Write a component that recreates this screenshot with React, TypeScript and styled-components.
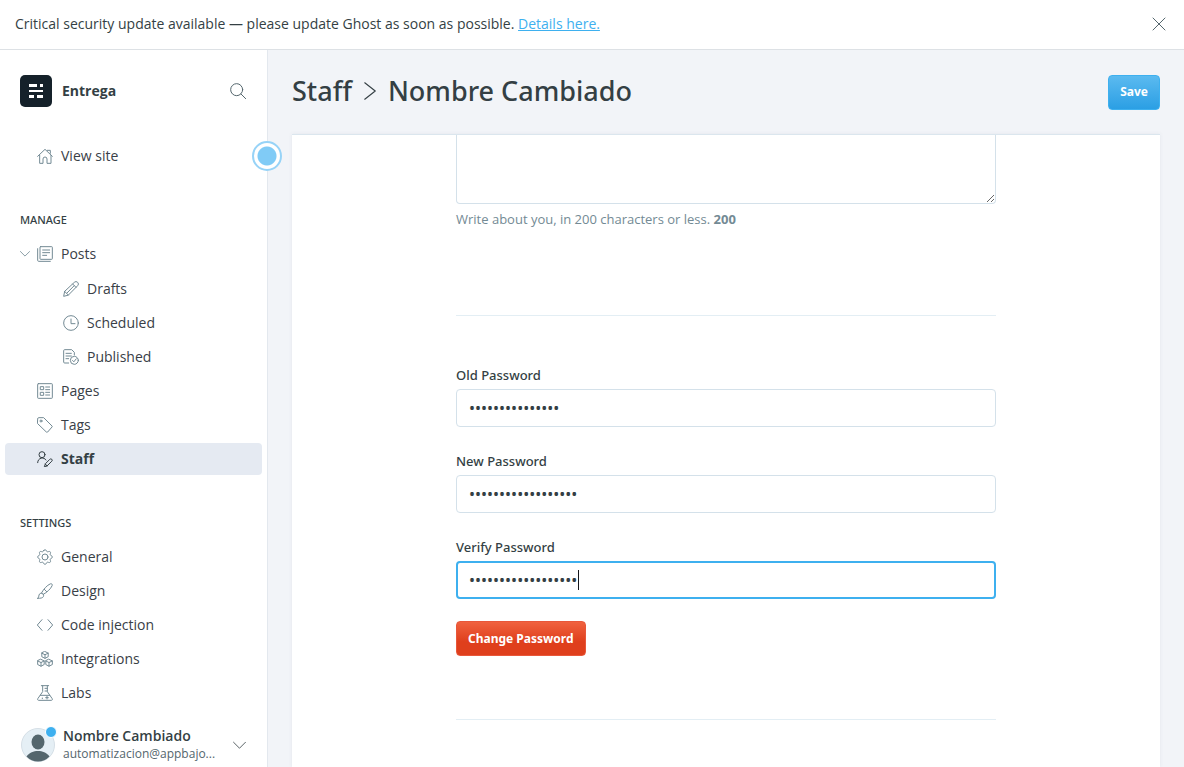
import React, { useEffect, useRef } from "react";
import styled, { createGlobalStyle, css } from "styled-components";

const mediumFont = `"Noto Sans", "Open Sans", sans-serif`;

const GlobalStyle = createGlobalStyle`
  *, *::before, *::after { box-sizing: border-box; }
  body {
    margin: 0;
    background: #f2f4f8;
    color: #394047;
    font-family: "Open Sans", "Noto Sans", sans-serif;
    font-size: 14px;
    line-height: 20px;
  }
  button, input, textarea { font: inherit; }
  svg { flex: none; }
`;

const Page = styled.div`
  display: flex;
  flex-direction: column;
  height: 100vh;
  overflow: hidden;
`;

const Banner = styled.aside`
  display: flex;
  align-items: center;
  justify-content: space-between;
  flex: none;
  height: 50px;
  padding: 0 17px 2px 15px;
  background: #fff;
  border-bottom: 1px solid #dde1e5;
  color: #343f44;
`;

const Link = styled.a`
  color: #3eb0ef;
  text-decoration: underline;
`;

const IconButton = styled.button`
  display: flex;
  align-items: center;
  justify-content: center;
  padding: 0;
  border: 0;
  background: none;
  color: #54666d;
  cursor: pointer;
`;

const Body = styled.div`
  display: flex;
  flex: 1;
  min-height: 0;
`;

const Sidebar = styled.nav`
  position: relative;
  display: flex;
  flex-direction: column;
  flex: none;
  width: 268px;
  background: #fff;
  border-right: 1px solid #e3e8ee;
`;

const SiteHeader = styled.header`
  display: flex;
  align-items: center;
  gap: 10px;
  margin: 25px 21px 33px 20px;
`;

const SiteName = styled.div`
  flex: 1;
  color: #343f44;
  font-weight: 700;
`;

const Section = styled.section`
  margin-bottom: 38px;
  &:last-of-type { margin-bottom: 0; }
`;

const SectionTitle = styled.h2`
  margin: 0 0 8px;
  padding-left: 20px;
  font-family: ${mediumFont};
  font-size: 11px;
  font-weight: 500;
  line-height: 20px;
  color: #343f44;
  text-transform: uppercase;
`;

const NavList = styled.ul<{ $nested?: boolean }>`
  display: flex;
  flex-direction: column;
  gap: 2px;
  margin: ${(p) => (p.$nested ? "3px 0 0 26px" : "0 5px")};
  padding: 0;
  list-style: none;
`;

const NavLink = styled.a<{ $active?: boolean }>`
  position: relative;
  display: flex;
  align-items: center;
  gap: 8px;
  height: 32px;
  padding-left: 32px;
  border-radius: 4px;
  color: #394047;
  text-decoration: none;
  svg { color: #738a94; }
  ${(p) =>
    p.$active &&
    css`
      background: #e5eaf2;
      color: #343f44;
      font-weight: 700;
      svg { color: #343f44; }
    `}
`;

const Expander = styled.span`
  position: absolute;
  left: 15px;
  display: flex;
`;

const Beacon = styled.button`
  position: absolute;
  top: 91px;
  right: -15px;
  width: 30px;
  height: 30px;
  padding: 0;
  border: 2px solid #97d3f7;
  border-radius: 50%;
  background: radial-gradient(circle, #80cbf6 0 9px, #fff 10px);
`;

const UserMenu = styled.button`
  display: flex;
  align-items: center;
  gap: 8px;
  margin-top: auto;
  padding: 0 21px 4px;
  border: 0;
  background: none;
  color: #343f44;
  text-align: left;
  line-height: 18px;
`;

const Avatar = styled.span`
  position: relative;
  display: flex;
  flex: none;
`;

const Unread = styled.span`
  position: absolute;
  top: -2px;
  right: -2px;
  width: 12px;
  height: 12px;
  border: 1px solid #fff;
  border-radius: 50%;
  background: #3eb0ef;
`;

const UserText = styled.span`
  display: flex;
  flex-direction: column;
  flex: 1;
  white-space: nowrap;
`;

const UserName = styled.span`
  font-weight: 600;
`;

const UserEmail = styled.span`
  color: #54666d;
  font-size: 12px;
`;

const Main = styled.main`
  display: flex;
  flex: 1;
  flex-direction: column;
  min-width: 0;
  padding: 0 24px;
`;

const Toolbar = styled.header`
  display: flex;
  align-items: center;
  justify-content: space-between;
  height: 84px;
`;

const Breadcrumb = styled.h1`
  display: flex;
  align-items: center;
  gap: 9px;
  margin: 0;
  padding-bottom: 2px;
  color: #343f44;
  font-family: ${mediumFont};
  font-size: 27px;
  font-weight: 500;
  line-height: 32px;
`;

const CrumbLink = styled.a`
  color: inherit;
  text-decoration: none;
`;

const Button = styled.button<{ $tone: "blue" | "red" }>`
  height: 35px;
  padding: 0 11px;
  border: 1px solid ${(p) => (p.$tone === "blue" ? "#3eb0ef" : "#e8573a")};
  border-radius: 4px;
  background: ${(p) =>
    p.$tone === "blue"
      ? "linear-gradient(#5bbaf0, #2b9fe4)"
      : "linear-gradient(#f0623f, #df3f1c 60%, #df3f1c)"};
  color: #fff;
  font-family: ${mediumFont};
  font-size: 12px;
  font-weight: 700;
  cursor: pointer;
`;

const Card = styled.section`
  flex: 1;
  min-height: 0;
  overflow: hidden;
  background: #fff;
  border-top: 1px solid #dbe6ee;
  box-shadow: 0 0 4px rgba(60, 80, 120, 0.08);
`;

const Form = styled.form`
  width: 100%;
  max-width: 540px;
  margin: 0 auto;
`;

const Bio = styled.textarea`
  display: block;
  width: 100%;
  height: 69px;
  padding: 8px 12px;
  border: solid #d4e1ea;
  border-width: 0 1px 1px;
  border-radius: 0 0 4px 4px;
  background: #fff;
  outline: 0;
  resize: vertical;
`;

const Hint = styled.p`
  margin: 5px 0 86px;
  color: #738a94;
  font-size: 13px;
`;

const Divider = styled.hr`
  height: 1px;
  margin: 0;
  border: 0;
  background: #e3eef4;
`;

const Fields = styled.div`
  display: flex;
  flex-direction: column;
  gap: 25px;
  margin: 50px 0 22px;
`;

const Field = styled.div`
  position: relative;
  display: flex;
  flex-direction: column;
  gap: 5px;
`;

const Label = styled.label`
  font-family: ${mediumFont};
  font-size: 13px;
  font-weight: 500;
  line-height: 18px;
  color: #343f44;
`;

const Input = styled.input`
  width: 100%;
  height: 38px;
  padding: 0 12px;
  border: 1px solid #d4e1ea;
  border-radius: 4px;
  background: #fff;
  color: #343f44;
  font-family: ${mediumFont};
  font-size: 16px;
  caret-color: transparent;
  outline: 0;
  &:focus {
    padding: 0 11px;
    border: 2px solid #3eb0ef;
  }
`;

const Caret = styled.span<{ $after: number }>`
  position: absolute;
  bottom: 9px;
  left: ${(p) => 14 + p.$after * 6}px;
  width: 1px;
  height: 20px;
  background: #15171a;
  pointer-events: none;
`;

const Actions = styled.div`
  margin-bottom: 63px;
`;

const shapes: Record<string, React.ReactNode> = {
  home: (
    <path d="M1 12.500 12 2l11 10.500M4 11v12h5v-6.500a2.500 2.500 0 0 1 6 0V23h6V11M15.500 3.500H20V8" />
  ),
  posts: (
    <path d="M5.500 1h16.500a1 1 0 0 1 1 1v17a1 1 0 0 1-1 1H5.500a1 1 0 0 1-1-1V2a1 1 0 0 1 1-1zM1 4v17.500a1.500 1.500 0 0 0 1.500 1.500H20M8.500 6h10.500M8.500 10h10.500M8.500 14h6" />
  ),
  pencil: (
    <path d="m2.500 15.500-1.500 7.500 7-1.800L22 7a3.500 3.500 0 0 0-5-5L2.500 15.500l5.500 5.700M14.500 4.500l5 5M16.800 7 6 18" />
  ),
  clock: (
    <>
      <circle cx="12" cy="12" r="11" />
      <path d="M12 6v7h6" />
    </>
  ),
  published: (
    <>
      <path d="M8.500 21H2.500A1.500 1.500 0 0 1 1 19.500v-17A1.500 1.500 0 0 1 2.500 1H13l4 4v4M4.500 6.500h8M4.500 10.500h8M4.500 14.500h4" />
      <circle cx="17" cy="17" r="6" />
      <path d="m14.300 17.200 2 2 3.500-4.400" />
    </>
  ),
  pages: (
    <>
      <rect x="1" y="1" width="22" height="22" rx="1" />
      <path d="M5.500 5.500h4.500V10H5.500zM5.500 14h4.500v4.500H5.500zM13 6h6M13 10h6M13 14h6M13 18h6" />
    </>
  ),
  tag: (
    <>
      <path d="M1 2.500A1.500 1.500 0 0 1 2.500 1H10l12.500 12.500a1 1 0 0 1 0 1.500L16 22.500a1.500 1.500 0 0 1-2 0L1 10z" />
      <circle cx="6" cy="6" r="1.500" />
    </>
  ),
  staff: (
    <>
      <circle cx="7.500" cy="5.500" r="4.500" />
      <path d="M1 17.500c0-8 10-9 12.500-4M12.500 19.500l-1.500 4 4-1 7.200-7.200a2 2 0 0 0-2.900-2.900zM12.500 19.500l2.500 3" />
    </>
  ),
  gear: (
    <>
      <circle cx="12" cy="12" r="4.500" />
      <path d="M10 2.500c.8-2 3.200-2 4 0 .6 1.700 1.700 2.100 3.300 1.400 2-.9 3.700.8 2.800 2.800-.7 1.600-.3 2.700 1.400 3.300 2 .8 2 3.200 0 4-1.700.6-2.100 1.700-1.400 3.300.9 2-.8 3.700-2.800 2.800-1.600-.7-2.700-.3-3.300 1.400-.8 2-3.200 2-4 0-.6-1.700-1.700-2.100-3.300-1.400-2 .9-3.700-.8-2.800-2.800.7-1.600.3-2.700-1.400-3.300-2-.8-2-3.200 0-4 1.700-.6 2.100-1.700 1.400-3.300-.9-2 .8-3.700 2.800-2.800C8.300 4.600 9.400 4.200 10 2.500z" />
    </>
  ),
  brush: (
    <path d="M1 23c2-1 1.500-3 2-5 .8-3 4.500-3.500 6-1.500 2 2.500.5 5.500-2.500 6-2 .4-3.500.5-5.500.5zM7 14.500C10 9 15 3.500 20 1.300c2-.8 3.500.7 2.700 2.700C20.500 9 15 14 9.500 17M11 9.500l3.500 3.500" />
  ),
  code: <path d="m7.500 4-7 8 7 8M16.500 4l7 8-7 8" />,
  cubes: (
    <path d="m12 .8 4.800 2.400v5.400L12 11 7.200 8.600V3.200zM7.200 3.200 12 5.600l4.800-2.400M12 5.600V11M6 12.500l4.800 2.400v5.400L6 22.800l-5-2.500v-5.400zM1 14.900l5 2.400 4.800-2.400M6 17.300v5.500M18 12.500l5 2.400v5.400l-5 2.500-4.800-2.500v-5.400zM13.200 14.900l4.800 2.400 5-2.400M18 17.300v5.500" />
  ),
  labs: (
    <path d="M6.500 1h11M8.500 1v9L1.200 20.500C.5 22 1 23 2.500 23h19c1.500 0 2-1 1.300-2.500L15.500 10V1M12 5h3.500M12 9h3.500M5 15.500h14M15 17v4M13 19h4M8 19.500v1" />
  ),
  search: (
    <>
      <circle cx="10" cy="10" r="9" />
      <path d="m16.500 16.500 7 7" />
    </>
  ),
  close: <path d="m3 3 18 18M21 3 3 21" />,
  down: <path d="m1 6 11 11L23 6" />,
  right: <path d="m5 1 14 11L5 23" />,
};

const Icon = ({ name, size = 16, weight = 1.5 }: { name: string; size?: number; weight?: number }) => (
  <svg
    width={size}
    height={size}
    viewBox="0 0 24 24"
    fill="none"
    stroke="currentColor"
    strokeWidth={weight}
    strokeLinecap="round"
    strokeLinejoin="round"
    aria-hidden="true"
  >
    {shapes[name]}
  </svg>
);

const Logo = () => (
  <svg width="32" height="32" viewBox="0 0 32 32" aria-hidden="true">
    <rect width="32" height="32" rx="5" fill="#15212a" />
    <path
      d="M9 9h8v3H9zM20 9h3v3h-3zM9 15h14v2H9zM9 20h5v3H9zM17 20h6v3h-6z"
      fill="#fff"
    />
  </svg>
);

const Person = () => (
  <svg width="34" height="34" viewBox="0 0 34 34" aria-hidden="true">
    <circle cx="17" cy="17" r="16.500" fill="#e5eff5" stroke="#d5dfe6" />
    <ellipse cx="17" cy="14" rx="6.500" ry="7.500" fill="#54666d" />
    <path d="M5.500 28.500c3-4 7-5.500 11.500-5.500s8.500 1.500 11.500 5.500A16 16 0 0 1 17 33.500a16 16 0 0 1-11.500-5z" fill="#54666d" />
  </svg>
);

const Item = ({ icon, label, active }: { icon: string; label: string; active?: boolean }) => (
  <li>
    <NavLink href="#" $active={active} aria-current={active ? "page" : undefined}>
      <Icon name={icon} />
      {label}
    </NavLink>
  </li>
);

const PasswordField = ({ id, label, value, focused }: { id: string; label: string; value: string; focused?: boolean }) => {
  const ref = useRef<HTMLInputElement>(null);
  useEffect(() => {
    if (focused && ref.current) {
      ref.current.focus();
      ref.current.setSelectionRange(value.length, value.length);
    }
  }, [focused, value]);
  return (
    <Field>
      <Label htmlFor={id}>{label}</Label>
      <Input ref={ref} id={id} type="password" defaultValue={value} />
      {focused && <Caret $after={value.length} />}
    </Field>
  );
};

export default function App() {
  return (
    <>
      <GlobalStyle />
      <Page>
        <Banner>
          <span>
            Critical security update available — please update Ghost as soon as possible.{" "}
            <Link href="#">Details here.</Link>
          </span>
          <IconButton type="button" aria-label="Close">
            <Icon name="close" />
          </IconButton>
        </Banner>
        <Body>
          <Sidebar>
            <SiteHeader>
              <Logo />
              <SiteName>Entrega</SiteName>
              <IconButton type="button" aria-label="Search">
                <Icon name="search" />
              </IconButton>
            </SiteHeader>
            <Section>
              <NavList>
                <Item icon="home" label="View site" />
              </NavList>
            </Section>
            <Section>
              <SectionTitle>Manage</SectionTitle>
              <NavList>
                <li>
                  <NavLink href="#">
                    <Expander>
                      <Icon name="down" size={10} weight={2} />
                    </Expander>
                    <Icon name="posts" />
                    Posts
                  </NavLink>
                  <NavList $nested>
                    <Item icon="pencil" label="Drafts" />
                    <Item icon="clock" label="Scheduled" />
                    <Item icon="published" label="Published" />
                  </NavList>
                </li>
                <Item icon="pages" label="Pages" />
                <Item icon="tag" label="Tags" />
                <Item icon="staff" label="Staff" active />
              </NavList>
            </Section>
            <Section>
              <SectionTitle>Settings</SectionTitle>
              <NavList>
                <Item icon="gear" label="General" />
                <Item icon="brush" label="Design" />
                <Item icon="code" label="Code injection" />
                <Item icon="cubes" label="Integrations" />
                <Item icon="labs" label="Labs" />
              </NavList>
            </Section>
            <UserMenu type="button">
              <Avatar>
                <Person />
                <Unread />
              </Avatar>
              <UserText>
                <UserName>Nombre Cambiado</UserName>
                <UserEmail>automatizacion@appbajo...</UserEmail>
              </UserText>
              <Icon name="down" size={13} />
            </UserMenu>
            <Beacon type="button" aria-label="Toggle sidebar" />
          </Sidebar>
          <Main>
            <Toolbar>
              <Breadcrumb>
                <CrumbLink href="#">Staff</CrumbLink>
                <Icon name="right" size={18} />
                Nombre Cambiado
              </Breadcrumb>
              <Button type="button" $tone="blue">Save</Button>
            </Toolbar>
            <Card>
              <Form>
                <Bio aria-label="Bio" />
                <Hint>
                  Write about you, in 200 characters or less. <b>200</b>
                </Hint>
                <Divider />
                <Fields>
                  <PasswordField id="old-password" label="Old Password" value="123456789012345" />
                  <PasswordField id="new-password" label="New Password" value="123456789012345678" />
                  <PasswordField id="verify-password" label="Verify Password" value="123456789012345678" focused />
                </Fields>
                <Actions>
                  <Button type="button" $tone="red">Change Password</Button>
                </Actions>
                <Divider />
              </Form>
            </Card>
          </Main>
        </Body>
      </Page>
    </>
  );
}
